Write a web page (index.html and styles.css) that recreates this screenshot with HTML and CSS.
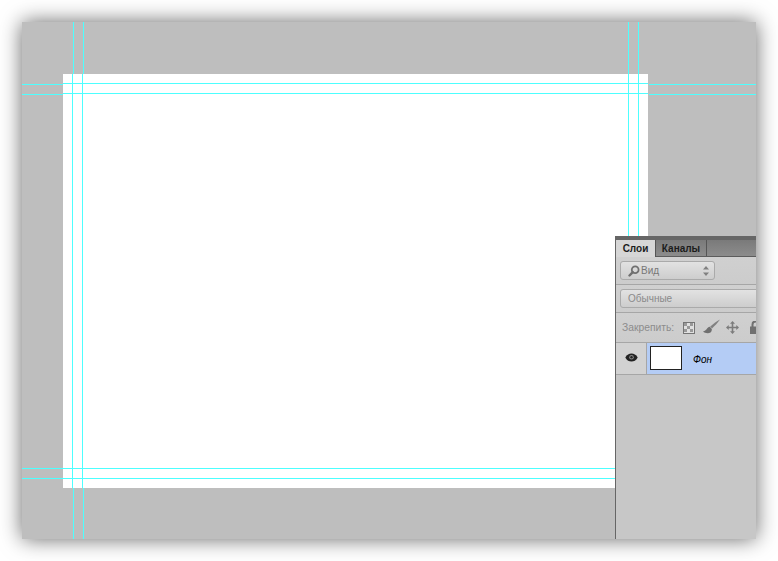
FILE: index.html
```html
<!DOCTYPE html>
<html lang="ru">
<head>
<meta charset="utf-8">
<title>Фон</title>
<link rel="stylesheet" href="styles.css">
</head>
<body>
<main class="workspace">
  <div class="canvas"></div>
  <i class="guide v gv1"></i><i class="guide v gv2"></i>
  <i class="guide v gv1w"></i><i class="guide v gv2w"></i>
  <i class="guide v gv1b"></i><i class="guide v gv2b"></i>
  <i class="guide v gv3"></i><i class="guide v gv4"></i>
  <i class="guide h gh1"></i><i class="guide h gh2"></i>
  <i class="guide h gh3"></i><i class="guide h gh4"></i>
  <i class="guide h gh1r"></i><i class="guide h gh2r"></i>
  <i class="guide h gh1w"></i><i class="guide h gh2w"></i>
  <i class="guide h gh5"></i><i class="guide h gh6"></i>
  <section class="panel">
    <div class="tabs">
      <span class="tab active">Слои</span>
      <span class="tab">Каналы</span>
    </div>
    <div class="row filter-row">
      <div class="select kind">
        <svg class="search" width="12" height="12" viewBox="0 0 12 12"><circle cx="7.200" cy="4.800" r="3.400" fill="none" stroke="#707070" stroke-width="1.800"/><path d="M4.800 7.200 1.500 10.500" stroke="#707070" stroke-width="2.400" stroke-linecap="round"/></svg>
        <span>Вид</span>
        <svg class="updown" width="6" height="10" viewBox="0 0 6 10"><path d="M3 0 6 3.500H0zM3 10 0 6.500H6z" fill="#808080"/></svg>
      </div>
    </div>
    <div class="row blend-row">
      <div class="select blend"><span>Обычные</span></div>
    </div>
    <div class="row lock-row">
      <span class="lock-label">Закрепить:</span>
      <svg class="lock-icon" width="12" height="12" viewBox="0 0 12 12"><rect x=".5" y=".5" width="11" height="11" fill="#e0e0e0" stroke="#757575"/><path d="M1 1h3v3H1zM7 1h3v3H7zM4 4h3v3H4zM1 7h3v3H1zM7 7h3v3H7z" fill="#999"/></svg>
      <svg class="lock-icon brush" width="17" height="15" viewBox="0 0 17 15"><path d="M17 .5C13.500 2.500 10 5 7.200 7.500L9 9.500C11.500 7 14.500 4 17 .5z" fill="#808080"/><path d="M6.800 7.800C3.800 8 4.500 11.500 0 12.500 2.500 15 9.500 15.200 8.800 10z" fill="#707070"/></svg>
      <svg class="lock-icon move" width="13" height="13" viewBox="0 0 13 13"><path d="M6.500 0 9 2.700H7.300V5.700H10.300V4L13 6.500 10.300 9V7.300H7.300V10.300H9L6.500 13 4 10.300H5.700V7.300H2.700V9L0 6.500 2.700 4V5.700H5.700V2.700H4z" fill="#7c7c7c"/></svg>
      <svg class="lock-icon padlock" width="11" height="13" viewBox="0 0 11 13"><path d="M2.500 6V3.500a3 3 0 0 1 6 0V6" fill="none" stroke="#707070" stroke-width="2"/><rect y="5.500" width="11" height="7.500" fill="#707070"/></svg>
    </div>
    <div class="layer">
      <div class="eye-cell">
        <svg width="13" height="9" viewBox="0 0 13 9"><path d="M.3 4.500C2 1.500 4 .5 6.500.5s4.500 1 6.200 4c-1.700 3-3.700 4-6.200 4S2 7.500.3 4.500z" fill="#222"/><circle cx="6.500" cy="4.300" r="2.300" fill="#888"/><circle cx="6.500" cy="4.300" r="1.200" fill="#222"/></svg>
      </div>
      <div class="layer-body">
        <div class="thumb"></div>
        <span class="layer-name">Фон</span>
      </div>
    </div>
  </section>
</main>
</body>
</html>
```
FILE: styles.css
```css
html, body { margin: 0; padding: 0; background: #fff; }
body { width: 778px; height: 561px; overflow: hidden; font-family: "Liberation Sans", Arial, sans-serif; }
.workspace {
  position: relative; box-sizing: border-box;
  width: 734px; height: 517px; margin: 22px 0 0 22px;
  padding: 52px 0 0 41px; background: #bebebe;
  box-shadow: 0 0 20px rgba(0, 0, 0, .6);
}
.canvas { width: 585px; height: 414px; background: #fff; }
.guide { position: absolute; display: block; background: #4dffff; }
.guide.v { width: 1px; }
.guide.h { height: 1px; }
.gv1 { left: 51px; top: 0; height: 52px; }
.gv2 { left: 61px; top: 0; height: 52px; }
.gv1w { left: 50px; top: 52px; height: 414px; }
.gv2w { left: 60px; top: 52px; height: 414px; }
.gv1b { left: 51px; top: 466px; height: 51px; }
.gv2b { left: 61px; top: 466px; height: 51px; }
.gv3 { left: 606px; top: 0; height: 466px; }
.gv4 { left: 616px; top: 0; height: 466px; }
.gh1 { left: 0; top: 62px; width: 41px; }
.gh2 { left: 0; top: 72px; width: 41px; }
.gh1r { left: 627px; top: 62px; width: 107px; }
.gh2r { left: 627px; top: 72px; width: 107px; }
.gh1w { left: 41px; top: 61px; width: 585px; }
.gh2w { left: 41px; top: 71px; width: 585px; }
.gh3 { left: 0; top: 446px; width: 41px; }
.gh4 { left: 0; top: 456px; width: 41px; }
.gh5 { left: 41px; top: 446px; width: 552px; }
.gh6 { left: 41px; top: 456px; width: 552px; }
.panel {
  position: absolute; left: 593px; top: 214px; width: 141px; height: 303px;
  box-sizing: border-box; border-left: 1px solid #666; overflow: hidden;
  background: #c7c7c7; font-size: 10px; color: #777;
}
.tabs {
  display: flex; height: 21px; box-sizing: border-box;
  border-top: 4px solid #666; border-bottom: 1px solid #5c5c5c;
  background: linear-gradient(#7a7a7a, #8c8c8c);
}
.tab {
  width: 51px; box-sizing: border-box; display: flex; align-items: center; justify-content: center;
  font-weight: 700; font-size: 10px; color: #1c1c1c;
  border-right: 1px solid #555;
}
.tab.active { width: 40px; height: 17px; background: #d6d6d6; }
.row { display: flex; align-items: center; box-sizing: border-box; border-bottom: 1px solid #a6a6a6; background: linear-gradient(#d0d0d0, #cccccc); }
.filter-row { height: 28px; padding-left: 4px; }
.blend-row { height: 28px; padding-left: 4px; }
.lock-row { height: 30px; padding-left: 6px; }
.select {
  box-sizing: border-box; height: 19px; display: flex; align-items: center;
  border: 1px solid #aaa; border-radius: 3px;
  background: linear-gradient(#e2e2e2, #cdcdcd);
}
.kind { width: 95px; padding: 0 5px 0 7px; color: #777; }
.kind span { margin-left: 1px; flex: 1; }
.blend { width: 150px; flex: none; padding-left: 7px; color: #8a8a8a; }
.lock-label { width: 61px; flex: none; font-size: 10.3px; color: #8c8c8c; }
.lock-icon { flex: none; }
.brush { margin-left: 8px; margin-bottom: 2px; }
.move { margin-left: 6px; }
.padlock { margin-left: 11px; }
.layer { display: flex; height: 32px; box-sizing: border-box; border-bottom: 1px solid #a6a6a6; }
.eye-cell { width: 31px; box-sizing: border-box; display: flex; align-items: center; justify-content: center; background: #d2d2d2; border-right: 1px solid #a6a6a6; padding-bottom: 3px; }
.layer-body { flex: 1; display: flex; align-items: center; background: #b4ccf5; padding-left: 3px; }
.thumb { width: 30px; height: 22px; margin-bottom: 1px; background: #fff; border: 1px solid #222; }
.layer-name { margin-left: 11px; font-style: italic; font-size: 10px; color: #000; padding-top: 2px; }
```
